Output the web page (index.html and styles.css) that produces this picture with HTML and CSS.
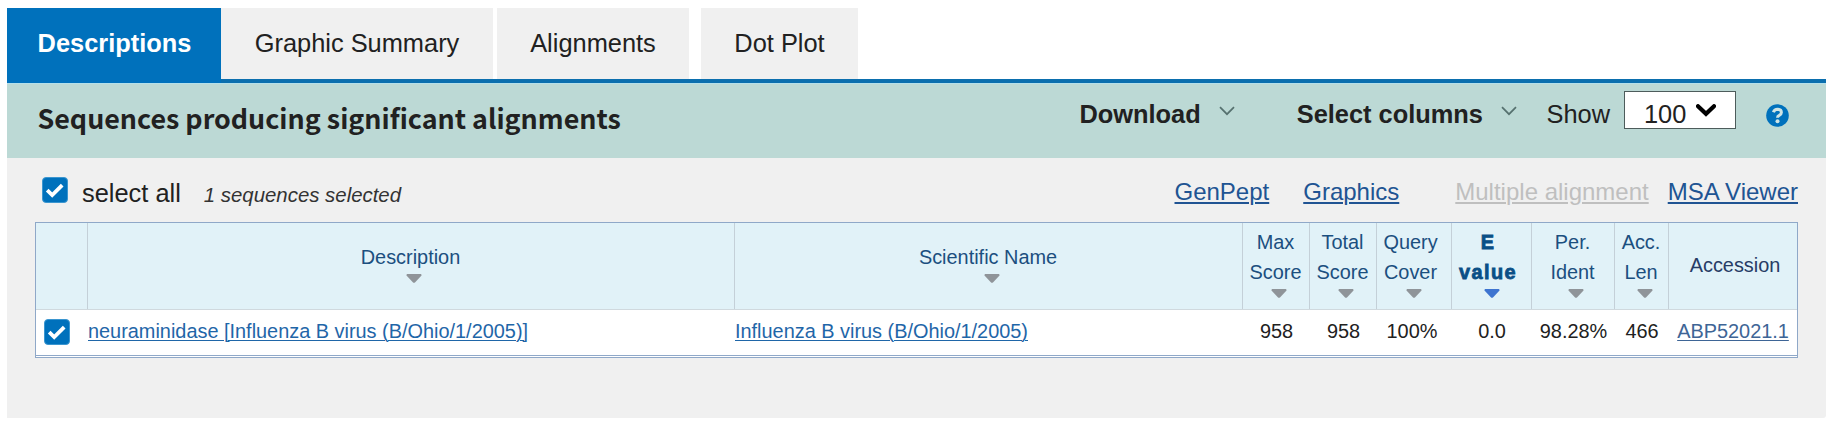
FILE: index.html
```html
<!DOCTYPE html>
<html lang="en">
<head>
<meta charset="utf-8">
<title>Descriptions</title>
<link rel="stylesheet" href="styles.css">
</head>
<body>
<svg class="defs" width="0" height="0">
  <symbol id="check" viewBox="0 0 26 26"><rect x=".5" y=".5" width="25" height="25" rx="3.5" fill="#0071bc" stroke="#3b96d0"/><path d="M5.2 13.2L10.2 18L20.2 8.2" fill="none" stroke="#fff" stroke-width="3.8"/></symbol>
  <symbol id="sort" viewBox="0 0 16 9"><path d="M1.2 0H14.8Q16 0.6 15.3 1.8L9.2 8.2Q8 9.4 6.8 8.2L.7 1.8Q0 .6 1.2 0Z" fill="currentColor"/></symbol>
  <symbol id="chev" viewBox="0 0 16 10"><path d="M1 1.2L8 8.2L15 1.2" fill="none" stroke="#56716f" stroke-width="1.7"/></symbol>
</svg>
<nav class="tabs">
  <a class="tab active">Descriptions</a>
  <a class="tab summary">Graphic Summary</a>
  <a class="tab alignments">Alignments</a>
  <a class="tab dotplot">Dot Plot</a>
</nav>
<main class="panel">
  <header class="bar">
    <h1 class="title">Sequences producing significant alignments</h1>
    <div class="tools">
      <span class="menu">Download</span><svg class="chev chev-download"><use href="#chev"/></svg>
      <span class="menu">Select columns</span><svg class="chev chev-columns"><use href="#chev"/></svg>
      <span class="show">Show</span>
      <span class="select">100<svg class="caret" viewBox="0 0 20 13"><path d="M2 2.2L10 9.8L18 2.2" fill="none" stroke="#000" stroke-width="4.2" stroke-linecap="round"/></svg></span>
      <svg class="help" viewBox="0 0 23 23"><circle cx="11.5" cy="11.5" r="11.3" fill="#0071bc"/><path d="M7.4 8.2Q8.4 5.2 11.6 5.2Q15.4 5.3 15.4 8.4Q15.4 10.2 13.2 11.3Q11.5 12.1 11.5 13.8" fill="none" stroke="#cfe4e4" stroke-width="3"/><circle cx="11.5" cy="17.3" r="2" fill="#cfe4e4"/></svg>
    </div>
  </header>
  <div class="actions">
    <svg class="box"><use href="#check"/></svg>
    <span class="all">select all</span>
    <em class="count">1 sequences selected</em>
    <div class="links"><a class="genpept">GenPept</a><a class="graphics">Graphics</a><a class="off">Multiple alignment</a><a>MSA Viewer</a></div>
  </div>
  <div class="results">
    <div class="row head">
      <div></div>
      <div><span>Description</span><svg class="sort"><use href="#sort"/></svg></div>
      <div><span>Scientific Name</span><svg class="sort"><use href="#sort"/></svg></div>
      <div><span>Max<br>Score</span><svg class="sort"><use href="#sort"/></svg></div>
      <div><span>Total<br>Score</span><svg class="sort"><use href="#sort"/></svg></div>
      <div class="left"><span>Query<br>Cover</span><svg class="sort"><use href="#sort"/></svg></div>
      <div class="left current"><span>E<br>value</span><svg class="sort"><use href="#sort"/></svg></div>
      <div><span>Per.<br>Ident</span><svg class="sort"><use href="#sort"/></svg></div>
      <div><span>Acc.<br>Len</span><svg class="sort"><use href="#sort"/></svg></div>
      <div class="accession"><span>Accession</span></div>
    </div>
    <div class="row body">
      <div class="tick"><svg class="box"><use href="#check"/></svg></div>
      <div class="text"><a>neuraminidase [Influenza B virus (B/Ohio/1/2005)]</a></div>
      <div class="text"><a>Influenza B virus (B/Ohio/1/2005)</a></div>
      <div>958</div>
      <div>958</div>
      <div class="cover">100%</div>
      <div>0.0</div>
      <div>98.28%</div>
      <div>466</div>
      <div><a class="acc">ABP52021.1</a></div>
    </div>
  </div>
</main>
</body>
</html>
```
FILE: styles.css
```css
* { box-sizing: border-box; }
body {
  margin: 0;
  padding: 8px 5px 0 7px;
  height: 423px;
  overflow: hidden;
  background: #fff;
  color: #212121;
  font-family: "Liberation Sans", Arial, sans-serif;
  font-size: 25.4px;
}
svg { display: block; flex: none; }
.defs { position: absolute; }

.tabs { display: flex; height: 75px; border-bottom: 4px solid #0b6fae; }
.tab {
  height: 71px;
  line-height: 70px;
  text-align: center;
  background: #f0f0f0;
  white-space: nowrap;
}
.active { width: 214px; height: 75px; padding-left: 1px; background: #0071bc; color: #fff; font-weight: bold; }
.summary { width: 272px; }
.alignments { width: 192px; margin-left: 4px; }
.dotplot { width: 157px; margin-left: 12px; }

.panel { height: 335px; background: #f0f0f0; border-radius: 0 0 3px 0; }
.bar {
  display: flex;
  justify-content: space-between;
  height: 75px;
  padding-left: 30.5px;
  background: #bcd9d5;
  border-top: 1px solid #b5e0ea;
}
.title {
  margin: 0;
  font: bold 26.85px/68px "Noto Sans CJK SC", "Source Sans Pro", sans-serif;
  white-space: nowrap;
}
.tools { display: flex; align-items: flex-start; height: 46px; padding: 7px 37px 0 0; line-height: 49px; white-space: nowrap; }
.menu { font-weight: bold; line-height: 49px; margin-top: -1px; }
.show { margin-top: -1px; }
.chev { width: 16px; height: 10px; margin-top: 15px; }
.chev-download { margin-left: 18px; margin-right: 62px; }
.chev-columns { margin-left: 18px; margin-right: 29.5px; }
.select {
  display: flex;
  width: 112px;
  height: 38px;
  margin-left: 14px;
  padding-left: 19px;
  border: 1px solid #4d5c5b;
  background: #fff;
  line-height: 44px;
}
.caret { width: 20px; height: 13px; margin: 12px 0 0 10px; }
.help { width: 23px; height: 23px; margin: 13px 0 0 30px; }

.actions { display: flex; height: 64px; padding: 19px 28px 0 35px; line-height: 29px; white-space: nowrap; }
.box { width: 26px; height: 26px; }
.all { margin: 2px 0 0 14px; }
.count { margin: 4px 0 0 23px; font-size: 20.4px; color: #333; }
.links { display: flex; margin-left: auto; font-size: 24px; color: #205493; }
.links a { text-decoration: underline; text-decoration-thickness: 2px; text-underline-offset: 2px; }
.graphics { margin: 0 56px 0 34px; }
.off { margin-right: 19px; color: #bfbfbf; }

.results {
  width: 1763px;
  height: 136px;
  margin-left: 28px;
  border: 1px solid #8fa8c8;
  background: #fff;
  font-size: 19.9px;
}
.row { display: grid; grid-template-columns: 52px 647px 508px 67px 67px 75px 80px 83px 54px 128px; }
.head { height: 87px; background: #e1f2f8; color: #1b4f7f; border-bottom: 1px solid #d0d9de; line-height: 30px; text-align: center; }
.head > div { display: flex; flex-direction: column; align-items: center; justify-content: center; padding-bottom: 7px; border-right: 1px solid #c4d0d8; }
.head > div:last-child { border-right: 0; }
.head span { margin-right: 1px; }
.sort { width: 16px; height: 9px; margin: 2px 0 0 6px; color: #8f9499; }
.head .left span { margin-right: 7px; }
.head .left .sort { margin-left: 0; }
.current .sort { color: #3d74d0; }
.current span { color: #0a4f86; font-weight: bold; letter-spacing: 1.4px; -webkit-text-stroke: .8px #0a4f86; }
.head .accession { padding: 0 0 2px 5px; color: #273c66; }
.body { height: 46px; border-bottom: 1px solid #8fa8c8; line-height: 43px; text-align: center; white-space: nowrap; }
.body .text { text-align: left; }
.body a { color: #1f66a8; text-decoration: underline; text-decoration-thickness: 1px; text-underline-offset: 2px; }
.body .acc { color: #3e6596; }
.body .cover { padding-right: 5px; }
.body .tick { padding: 9px 0 0 8px; }
```
